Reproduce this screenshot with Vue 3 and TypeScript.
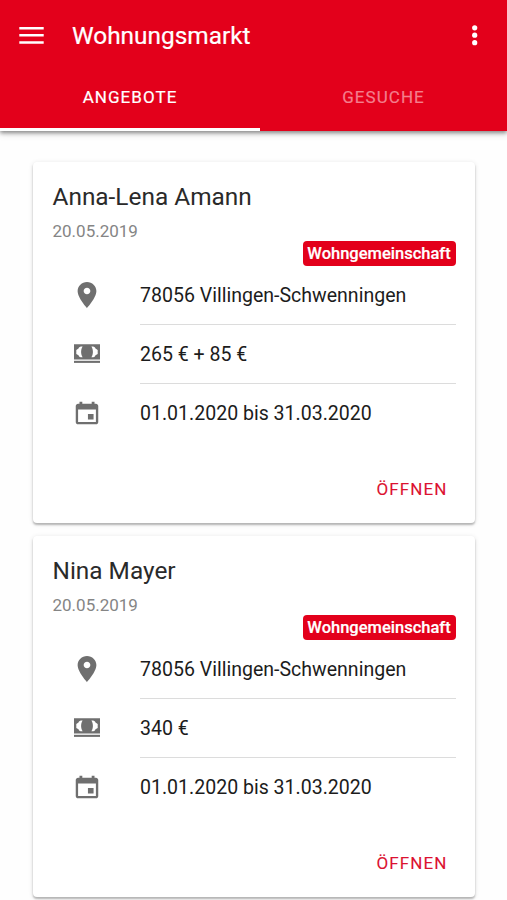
<script setup lang="ts">
interface Offer {
  name: string
  date: string
  kind: string
  place: string
  price: string
  period: string
}

const tabs: string[] = ['Angebote', 'Gesuche']

const offers: Offer[] = [
  {
    name: 'Anna-Lena Amann',
    date: '20.05.2019',
    kind: 'Wohngemeinschaft',
    place: '78056 Villingen-Schwenningen',
    price: '265 € + 85 €',
    period: '01.01.2020 bis 31.03.2020',
  },
  {
    name: 'Nina Mayer',
    date: '20.05.2019',
    kind: 'Wohngemeinschaft',
    place: '78056 Villingen-Schwenningen',
    price: '340 €',
    period: '01.01.2020 bis 31.03.2020',
  },
]
</script>

<template>
  <div class="app">
    <header class="header">
      <div class="toolbar">
        <svg class="menu" viewBox="0 0 25 17" aria-hidden="true">
          <path d="M.3 0h24.400v2.500H.3zM.3 7.100h24.400v2.500H.3zM.3 14.200h24.400v2.500H.3z" />
        </svg>
        <h1 class="title">Wohnungsmarkt</h1>
        <svg class="more" viewBox="0 0 6 21" aria-hidden="true">
          <circle cx="2.7" cy="2.800" r="2.600" />
          <circle cx="2.7" cy="10.200" r="2.600" />
          <circle cx="2.7" cy="17.700" r="2.600" />
        </svg>
      </div>
      <nav class="tabs">
        <button v-for="(tab, i) in tabs" :key="tab" class="tab" :class="{ active: i === 0 }">
          {{ tab }}
        </button>
      </nav>
    </header>

    <main class="list">
      <article v-for="offer in offers" :key="offer.name" class="card">
        <h2 class="name">{{ offer.name }}</h2>
        <p class="date">{{ offer.date }}</p>
        <div class="badge-row"><span class="badge">{{ offer.kind }}</span></div>
        <ul class="facts">
          <li class="fact">
            <svg class="icon" viewBox="0 0 512 512" aria-hidden="true">
              <path d="M256 32c-88.004 0-160 70.557-160 156.801C96 306.4 256 480 256 480s160-173.6 160-291.199C416 102.557 344.004 32 256 32zm0 212.801c-31.996 0-57.144-24.645-57.144-56 0-31.357 25.147-56 57.144-56s57.144 24.643 57.144 56c0 31.355-25.148 56-57.144 56z" />
            </svg>
            <span class="value">{{ offer.place }}</span>
          </li>
          <li class="fact">
            <svg class="icon" viewBox="0 0 30 30" aria-hidden="true">
              <path fill-rule="evenodd" d="M2 5.200h26v15.300H2zM10.600 7.600C8 7.600 7 8 6.500 9.600L4.300 11v4l2.200 1.300c.5 1.700 1.500 2 4.100 2C8.600 15.500 8.600 10.500 10.600 7.600zM19.400 7.600c2 2.900 2 7.900 0 10.700 2.600 0 3.600-.3 4.100-2l2.200-1.300v-4l-2.200-1.400C23 8 22 7.600 19.400 7.600z" />
              <path d="M2 21.800h26v2.100H2z" />
            </svg>
            <span class="value">{{ offer.price }}</span>
          </li>
          <li class="fact">
            <svg class="icon" viewBox="0 0 512 512" aria-hidden="true">
              <path d="M368.005 272h-96v96h96v-96zm-32-208v32h-160V64h-48v32h-24.01c-22.002 0-40 17.998-40 40v272c0 22.002 17.998 40 40 40h304.01c22.002 0 40-17.998 40-40V136c0-22.002-17.998-40-40-40h-24V64h-48zm72 344h-304.01V196h304.01v212z" />
            </svg>
            <span class="value">{{ offer.period }}</span>
          </li>
        </ul>
        <div class="actions"><button class="open">Öffnen</button></div>
      </article>
    </main>
  </div>
</template>

<style>
body {
  background: #fff;
  overflow: hidden;
}
</style>

<style scoped>
.app {
  height: 900px;
  overflow: hidden;
  background: #fefefe;
  font-family: Roboto, sans-serif;
}
h1, h2, p, ul { margin: 0; padding: 0; font-weight: 400; }
button {
  border: 0;
  padding: 0;
  background: none;
  font: inherit;
  text-transform: uppercase;
}
.header {
  height: 130.5px;
  background: #e3001b;
  color: #fff;
  box-shadow: 0 2px 4px rgba(0, 0, 0, 0.42), 0 3px 8px rgba(0, 0, 0, 0.1);
}
.toolbar {
  display: flex;
  align-items: center;
  height: 70px;
  padding: 0 29px 0 19px;
}
.menu { width: 25px; height: 17px; fill: #fff; }
.title {
  flex: 1;
  padding-top: 1px;
  margin-left: 28px;
  font-size: 24.4px;
  line-height: 30px;
  -webkit-text-stroke: 0.2px #fff;
}
.more { width: 6px; height: 21px; fill: #fff; }
.tabs {
  display: grid;
  grid-template-columns: 260px 247px;
  height: 60.5px;
}
.tab {
  padding-bottom: 3px;
  border-bottom: 3px solid transparent;
  font-size: 17px;
  letter-spacing: 1.05px;
  color: #f47f8d;
  -webkit-text-stroke: 0.2px currentColor;
}
.tab.active {
  border-color: #fff;
  color: #fff;
}
.list {
  display: flex;
  flex-direction: column;
  gap: 13px;
  padding: 31.5px 32px 0 32.5px;
}
.card {
  height: 361px;
  box-sizing: border-box;
  padding: 20px 19.5px 0 20px;
  border-radius: 4px;
  background: #fff;
  box-shadow: 0 2px 2px rgba(0, 0, 0, 0.24), 0 1px 5px rgba(0, 0, 0, 0.12);
}
.name {
  font-size: 24.4px;
  line-height: 30px;
  color: #2a2a2a;
}
.date {
  margin-top: 9px;
  font-size: 17px;
  line-height: 20px;
  color: #858585;
}
.badge-row {
  display: flex;
  justify-content: flex-end;
  height: 24.5px;
}
.badge {
  width: 153px;
  height: 25px;
  border-radius: 4px;
  background: #e3001b;
  color: #fff;
  font-size: 16.5px;
  font-weight: 500;
  line-height: 25px;
  text-align: center;
  -webkit-text-stroke: 0.2px #fff;
}
.facts { list-style: none; }
.fact {
  display: flex;
  align-items: center;
  height: 59px;
}
.icon {
  width: 30px;
  height: 30px;
  margin: 0 38.5px 0 19px;
  fill: #6f6f6f;
}
.value {
  flex: 1;
  height: 100%;
  box-sizing: border-box;
  border-bottom: 1px solid #dcdcdc;
  font-size: 19.55px;
  line-height: 60px;
  color: #1c1c1c;
}
.fact:last-child .value { border-bottom: 0; }
.actions {
  display: flex;
  justify-content: flex-end;
  padding: 35px 8px 0 0;
}
.open {
  font-size: 17px;
  line-height: 22px;
  letter-spacing: 1.1px;
  color: #dc1230;
  -webkit-text-stroke: 0.1px currentColor;
}
</style>
